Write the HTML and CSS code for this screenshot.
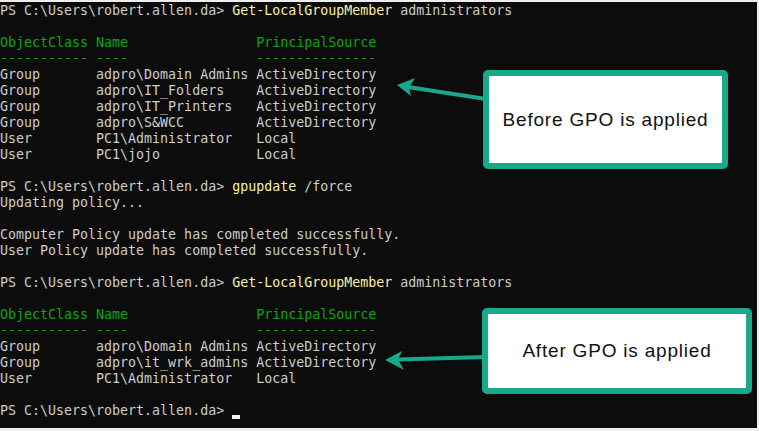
FILE: index.html
```html
<!DOCTYPE html>
<html lang="en">
<head>
<meta charset="utf-8">
<title>PowerShell - Get-LocalGroupMember</title>
<link rel="stylesheet" href="styles.css">
</head>
<body>
<div class="screen">
  <div class="terminal">
<pre class="console"><span>PS C:\Users\robert.allen.da&gt; </span><span class="cmd">Get-LocalGroupMember</span><span> administrators</span>

<span class="hdr">ObjectClass Name                PrincipalSource</span>
<span class="hdr">----------- ----                ---------------</span>
Group       adpro\Domain Admins ActiveDirectory
Group       adpro\IT_Folders    ActiveDirectory
Group       adpro\IT_Printers   ActiveDirectory
Group       adpro\S&amp;WCC         ActiveDirectory
User        PC1\Administrator   Local
User        PC1\jojo            Local

<span>PS C:\Users\robert.allen.da&gt; </span><span class="cmd">gpupdate</span><span> /force</span>
Updating policy...

Computer Policy update has completed successfully.
User Policy update has completed successfully.

<span>PS C:\Users\robert.allen.da&gt; </span><span class="cmd">Get-LocalGroupMember</span><span> administrators</span>

<span class="hdr">ObjectClass Name                PrincipalSource</span>
<span class="hdr">----------- ----                ---------------</span>
Group       adpro\Domain Admins ActiveDirectory
Group       adpro\it_wrk_admins ActiveDirectory
User        PC1\Administrator   Local

<span>PS C:\Users\robert.allen.da&gt; </span><span class="cursor"> </span></pre>
  </div>

  <svg class="arrows" width="759" height="431" viewBox="0 0 759 431" aria-hidden="true">
    <line x1="408" y1="85" x2="486" y2="97" class="shaft"/>
    <polygon points="397,83 415,76 409,85.5 411,94" class="head"/>
    <line x1="397" y1="357.5" x2="486" y2="355" class="shaft"/>
    <polygon points="385,358 402,349 398,357.5 404,368" class="head"/>
  </svg>

  <div class="callout callout-before">Before GPO is applied</div>
  <div class="callout callout-after">After GPO is applied</div>
</div>
</body>
</html>
```

FILE: styles.css
```css
html, body {
  margin: 0;
  padding: 0;
}

body {
  background: #eeeeee;
  width: 759px;
  height: 431px;
  overflow: hidden;
}

.screen {
  position: relative;
  width: 759px;
  height: 431px;
}

.terminal {
  margin: 2px 2px 3px 0;
  height: 426px;
  background: #0c0c0c;
  overflow: hidden;
}

.console {
  margin: 0;
  padding: 1px 0 0 0;
  font-family: "DejaVu Sans Mono", "Liberation Mono", monospace;
  font-size: 13.3px;
  line-height: 16px;
  color: #cccccc;
  white-space: pre;
}

.cmd {
  color: #f9f1a5;
}

.hdr {
  color: #16a116;
}

.cursor {
  display: inline-block;
  width: 8px;
  height: 16px;
  vertical-align: top;
  box-shadow: inset 0 -4px 0 #f2f2f2;
}

.arrows {
  position: absolute;
  left: 0;
  top: 0;
  pointer-events: none;
}

.shaft {
  stroke: #19a98a;
  stroke-width: 4;
}

.head {
  fill: #19a98a;
}

.callout {
  position: absolute;
  box-sizing: border-box;
  background: #ffffff;
  border: 6px solid #19a98a;
  border-radius: 5px;
  display: flex;
  align-items: center;
  justify-content: center;
  font-family: "Liberation Sans", Arial, sans-serif;
  font-size: 19px;
  letter-spacing: 0.8px;
  color: #111111;
}

.callout-before {
  left: 483px;
  top: 68px;
  width: 245px;
  height: 99px;
}

.callout-after {
  left: 482px;
  top: 306px;
  width: 270px;
  height: 86px;
}
```
